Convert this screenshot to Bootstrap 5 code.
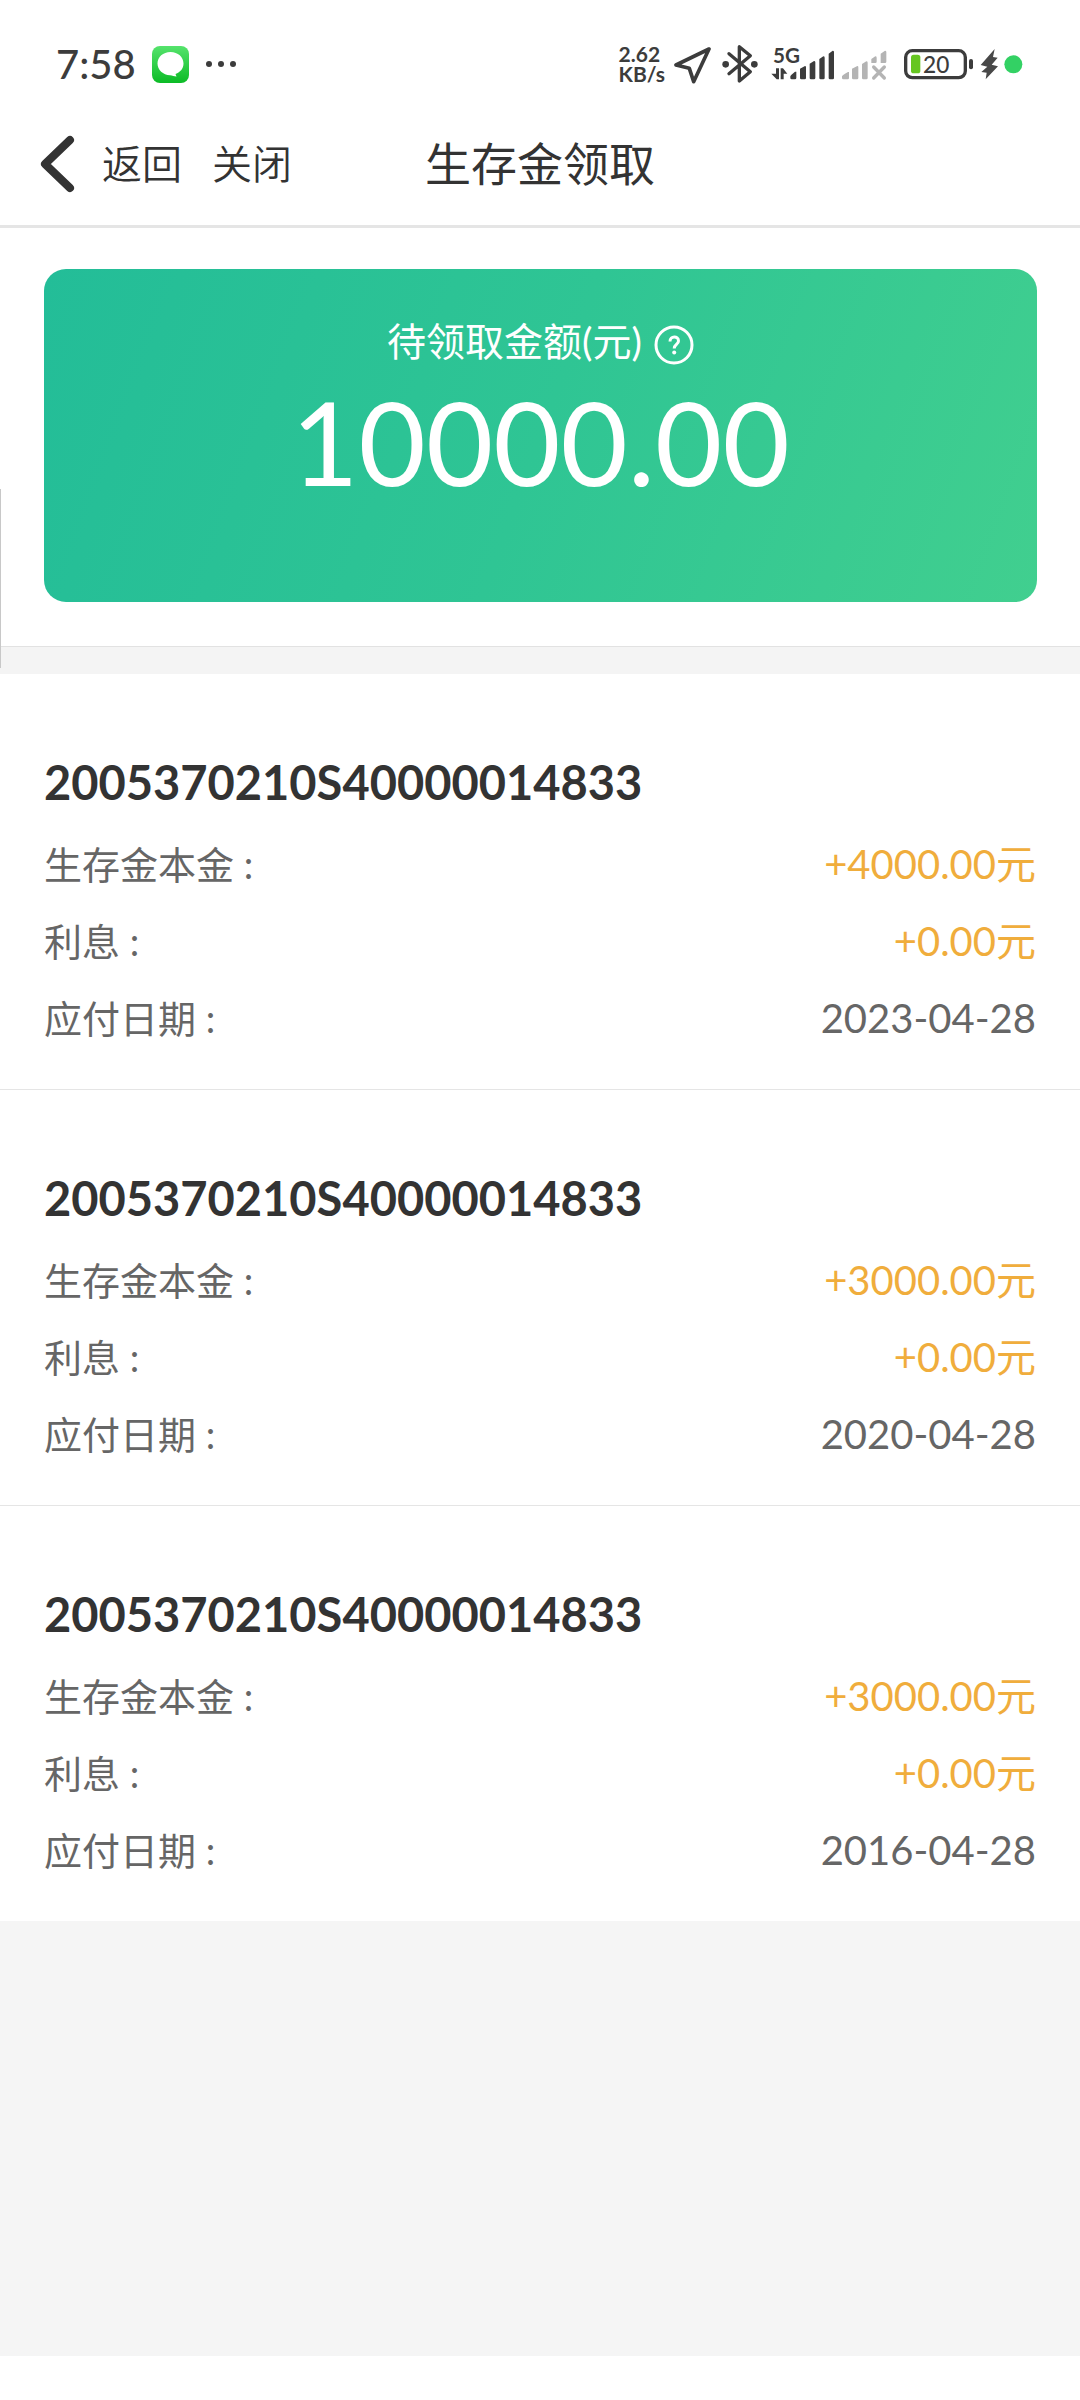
<!DOCTYPE html>
<html lang="zh-CN">
<head>
<meta charset="utf-8">
<meta name="viewport" content="width=device-width, initial-scale=1">
<title>生存金领取</title>
<link href="https://cdn.jsdelivr.net/npm/bootstrap@5.3.0/dist/css/bootstrap.min.css" rel="stylesheet">
<style>
  body { font-family: Lato, "Noto Sans CJK SC", sans-serif; color: #333; }
  svg { display: block; flex: none; }
  .status-bar { height: 102px; padding: 26px 56px 0 56px; color: #3c3c3c; }
  .clock { font-size: 40px; line-height: 40px; font-weight: 500; }
  .status-icons { gap: 4px; }
  .net-speed { font-size: 21px; line-height: 20px; font-weight: 700; }
  .battery { margin-left: 12px; }
  .title-bar { height: 126px; padding: 0 40px; border-bottom: 3px solid #e5e5e5; }
  .title-side { flex: 1 1 0; gap: 30px; }
  .nav-action { font-size: 40px; line-height: 60px; color: #333; font-weight: 350; gap: 26px; }
  .page-title { font-size: 46px; line-height: 60px; font-weight: 400; }
  .summary { padding: 41px 43px 44px 44px; }
  .amount-card { height: 333px; border-radius: 22px; padding-top: 42px; color: #fff;
    background: linear-gradient(110deg, #23bd98 0%, #2fc594 50%, #41cf8f 100%); }
  .amount-label { font-size: 39px; line-height: 60px; gap: 12px; }
  .amount-value { font-size: 116px; line-height: 142px; }
  .separator { height: 28px; background: #f4f4f4; border-top: 1px solid #e2e2e2; }
  .policy { padding: 78px 44px 32px 44px; border-bottom: 1px solid #e5e5e5; }
  .policy:last-child { border-bottom: 0; }
  .policy-no { font-size: 47px; line-height: 60px; margin: 0 0 14px; font-weight: 700; }
  .policy-row { line-height: 77px; color: #666; }
  .policy-row dt { font-size: 38px; font-weight: 400; }
  .policy-row dd { font-size: 40px; }
  .policy-row .money { color: #f0ad3c; }
  .filler { background: #f5f5f5; }
  .gesture-area { height: 44px; }
  .edge-handle { top: 489px; left: 0; width: 1px; height: 179px; background: #c8c8c8; }
</style>
</head>
<body class="bg-white">
<div class="d-flex flex-column min-vh-100 position-relative">
  <div class="status-bar d-flex align-items-center justify-content-between">
    <div class="d-flex align-items-center">
      <span class="clock">7:58</span>
      <svg class="ms-3" width="37" height="37" viewBox="0 0 37 37" aria-hidden="true">
        <defs><linearGradient id="msg" x1="0" y1="0" x2="0" y2="1"><stop offset="0" stop-color="#55e36c"/><stop offset="1" stop-color="#0cbb26"/></linearGradient></defs>
        <rect width="37" height="37" rx="8" fill="url(#msg)"/>
        <path d="M18.500 6C11 6 5.500 11 5.500 17.500S11 29 18 29.200C20.500 29.200 22 30.500 24.500 30.500L23.500 28C28.500 26 31.500 22.500 31.500 17.500C31.500 11 26 6 18.500 6Z" fill="#fff"/>
      </svg>
      <svg class="ms-3" width="32" height="8" viewBox="0 0 32 8" fill="#3c3c3c" aria-hidden="true"><circle cx="4" cy="4" r="3"/><circle cx="16" cy="4" r="3"/><circle cx="28" cy="4" r="3"/></svg>
    </div>
    <div class="status-icons d-flex align-items-center">
      <div class="net-speed me-1">2.62<br>KB/s</div>
      <svg width="38" height="42" viewBox="246 38 114 126" aria-hidden="true"><path d="M354 56L255 104L295 114L308 154Z" fill="none" stroke="#3c3c3c" stroke-width="11" stroke-linejoin="round"/></svg>
      <svg width="50" height="42" viewBox="378 38 150 126" aria-hidden="true"><path d="M420 70L484 124L451 152V49L484 76L420 130" fill="none" stroke="#3c3c3c" stroke-width="10" stroke-linejoin="round" stroke-linecap="round"/><circle cx="410" cy="102" r="10" fill="#3c3c3c"/><circle cx="496" cy="102" r="10" fill="#3c3c3c"/></svg>
      <svg width="67" height="42" viewBox="540 38 201 126" fill="#3c3c3c" aria-hidden="true">
        <text x="552" y="97" font-size="62" font-weight="700">5G</text>
        <path d="M561 114h9v33h-7L547 130h14zM575 147v-33h7l13 16h-11v17zM604 138q0-3 14-14h4v19q0 4-4 4h-10q-4 0-4-4zM633 115l15-8q3 0 3 4v32q0 4-4 4h-10q-4 0-4-4zM662 100l13-8q4 0 4 4v47q0 4-4 4h-9q-4 0-4-4zM691 86l12-8q4 0 4 4v61q0 4-4 4h-8q-4 0-4-4zM719 70l12-9q4 0 4 4v78q0 4-4 4h-8q-4 0-4-4z"/>
      </svg>
      <svg width="48" height="42" viewBox="62 38 144 126" fill="#b4b4b4" aria-hidden="true">
        <path d="M68 138q0-3 18-13h3v18q0 4-4 4H72q-4 0-4-4zM98 115l16-8q3 0 3 4v32q0 4-4 4h-11q-4 0-4-4zM128 101l13-8q4 0 4 4v46q0 4-4 4h-9q-4 0-4-4zM156 86l12-8q4 0 4 4v12q0 4-4 4h-12zM184 70l13-9q4 0 4 4v29q0 4-4 4h-13z"/>
        <path d="M163 110l32 33M195 110l-32 33" fill="none" stroke="#b4b4b4" stroke-width="10" stroke-linecap="round"/>
      </svg>
      <svg class="battery" width="70" height="42" viewBox="254 38 210 126" aria-hidden="true">
        <rect x="259" y="61" width="179" height="81" rx="20" fill="none" stroke="#3c3c3c" stroke-width="10"/>
        <rect x="275" y="73" width="28" height="56" rx="8" fill="#66c621"/>
        <rect x="449" y="86" width="12" height="31" rx="6" fill="#3c3c3c"/>
        <text x="311" y="127" font-size="68" font-weight="500" fill="#3c3c3c">20</text>
      </svg>
      <svg width="46" height="42" viewBox="476 38 138 126" aria-hidden="true"><path d="M526 56L484 104L504 109L486 125L502 127L499 147L536 108L517 103L535 82L521 80Z" fill="#484848"/><circle cx="582" cy="102" r="27" fill="#33d164"/></svg>
    </div>
  </div>

  <header class="title-bar d-flex align-items-center">
    <div class="title-side d-flex align-items-center">
      <a href="#" class="nav-action d-flex align-items-center text-decoration-none">
        <svg width="36" height="60" viewBox="0 0 36 60" aria-hidden="true"><path d="M30 6L5 30L30 54" fill="none" stroke="#333" stroke-width="8" stroke-linecap="round" stroke-linejoin="round"/></svg>
        <span>返回</span>
      </a>
      <a href="#" class="nav-action text-decoration-none">关闭</a>
    </div>
    <h1 class="page-title m-0">生存金领取</h1>
    <div class="title-side"></div>
  </header>

  <section class="summary">
    <div class="amount-card text-center">
      <div class="amount-label d-flex align-items-center justify-content-center">
        <span>待领取金额(元)</span>
        <button type="button" class="btn p-0 border-0 mt-2" aria-label="说明">
          <svg width="40" height="40" viewBox="0 0 40 40" fill="none" stroke="#fff" aria-hidden="true"><circle cx="20" cy="20" r="18" stroke-width="3"/><path d="M16 16.500C16 10.500 24.500 10.500 24.500 16C24.500 19.500 20.200 19.500 20.200 23.500" stroke-width="3"/><circle cx="20.200" cy="27.500" r="2" fill="#fff" stroke="none"/></svg>
        </button>
      </div>
      <div class="amount-value">10000.00</div>
    </div>
  </section>
  <div class="separator"></div>

  <main>
    <article class="policy">
      <h2 class="policy-no">2005370210S40000014833</h2>
      <dl class="m-0">
        <div class="policy-row d-flex justify-content-between"><dt>生存金本金&nbsp;:</dt><dd class="m-0 money">+4000.00元</dd></div>
        <div class="policy-row d-flex justify-content-between"><dt>利息&nbsp;:</dt><dd class="m-0 money">+0.00元</dd></div>
        <div class="policy-row d-flex justify-content-between"><dt>应付日期&nbsp;:</dt><dd class="m-0">2023-04-28</dd></div>
      </dl>
    </article>
    <article class="policy">
      <h2 class="policy-no">2005370210S40000014833</h2>
      <dl class="m-0">
        <div class="policy-row d-flex justify-content-between"><dt>生存金本金&nbsp;:</dt><dd class="m-0 money">+3000.00元</dd></div>
        <div class="policy-row d-flex justify-content-between"><dt>利息&nbsp;:</dt><dd class="m-0 money">+0.00元</dd></div>
        <div class="policy-row d-flex justify-content-between"><dt>应付日期&nbsp;:</dt><dd class="m-0">2020-04-28</dd></div>
      </dl>
    </article>
    <article class="policy">
      <h2 class="policy-no">2005370210S40000014833</h2>
      <dl class="m-0">
        <div class="policy-row d-flex justify-content-between"><dt>生存金本金&nbsp;:</dt><dd class="m-0 money">+3000.00元</dd></div>
        <div class="policy-row d-flex justify-content-between"><dt>利息&nbsp;:</dt><dd class="m-0 money">+0.00元</dd></div>
        <div class="policy-row d-flex justify-content-between"><dt>应付日期&nbsp;:</dt><dd class="m-0">2016-04-28</dd></div>
      </dl>
    </article>
  </main>
  <div class="filler flex-grow-1"></div>
  <div class="gesture-area"></div>
  <div class="edge-handle position-absolute"></div>
</div>
<script src="https://cdn.jsdelivr.net/npm/bootstrap@5.3.0/dist/js/bootstrap.bundle.min.js"></script>
</body>
</html>
